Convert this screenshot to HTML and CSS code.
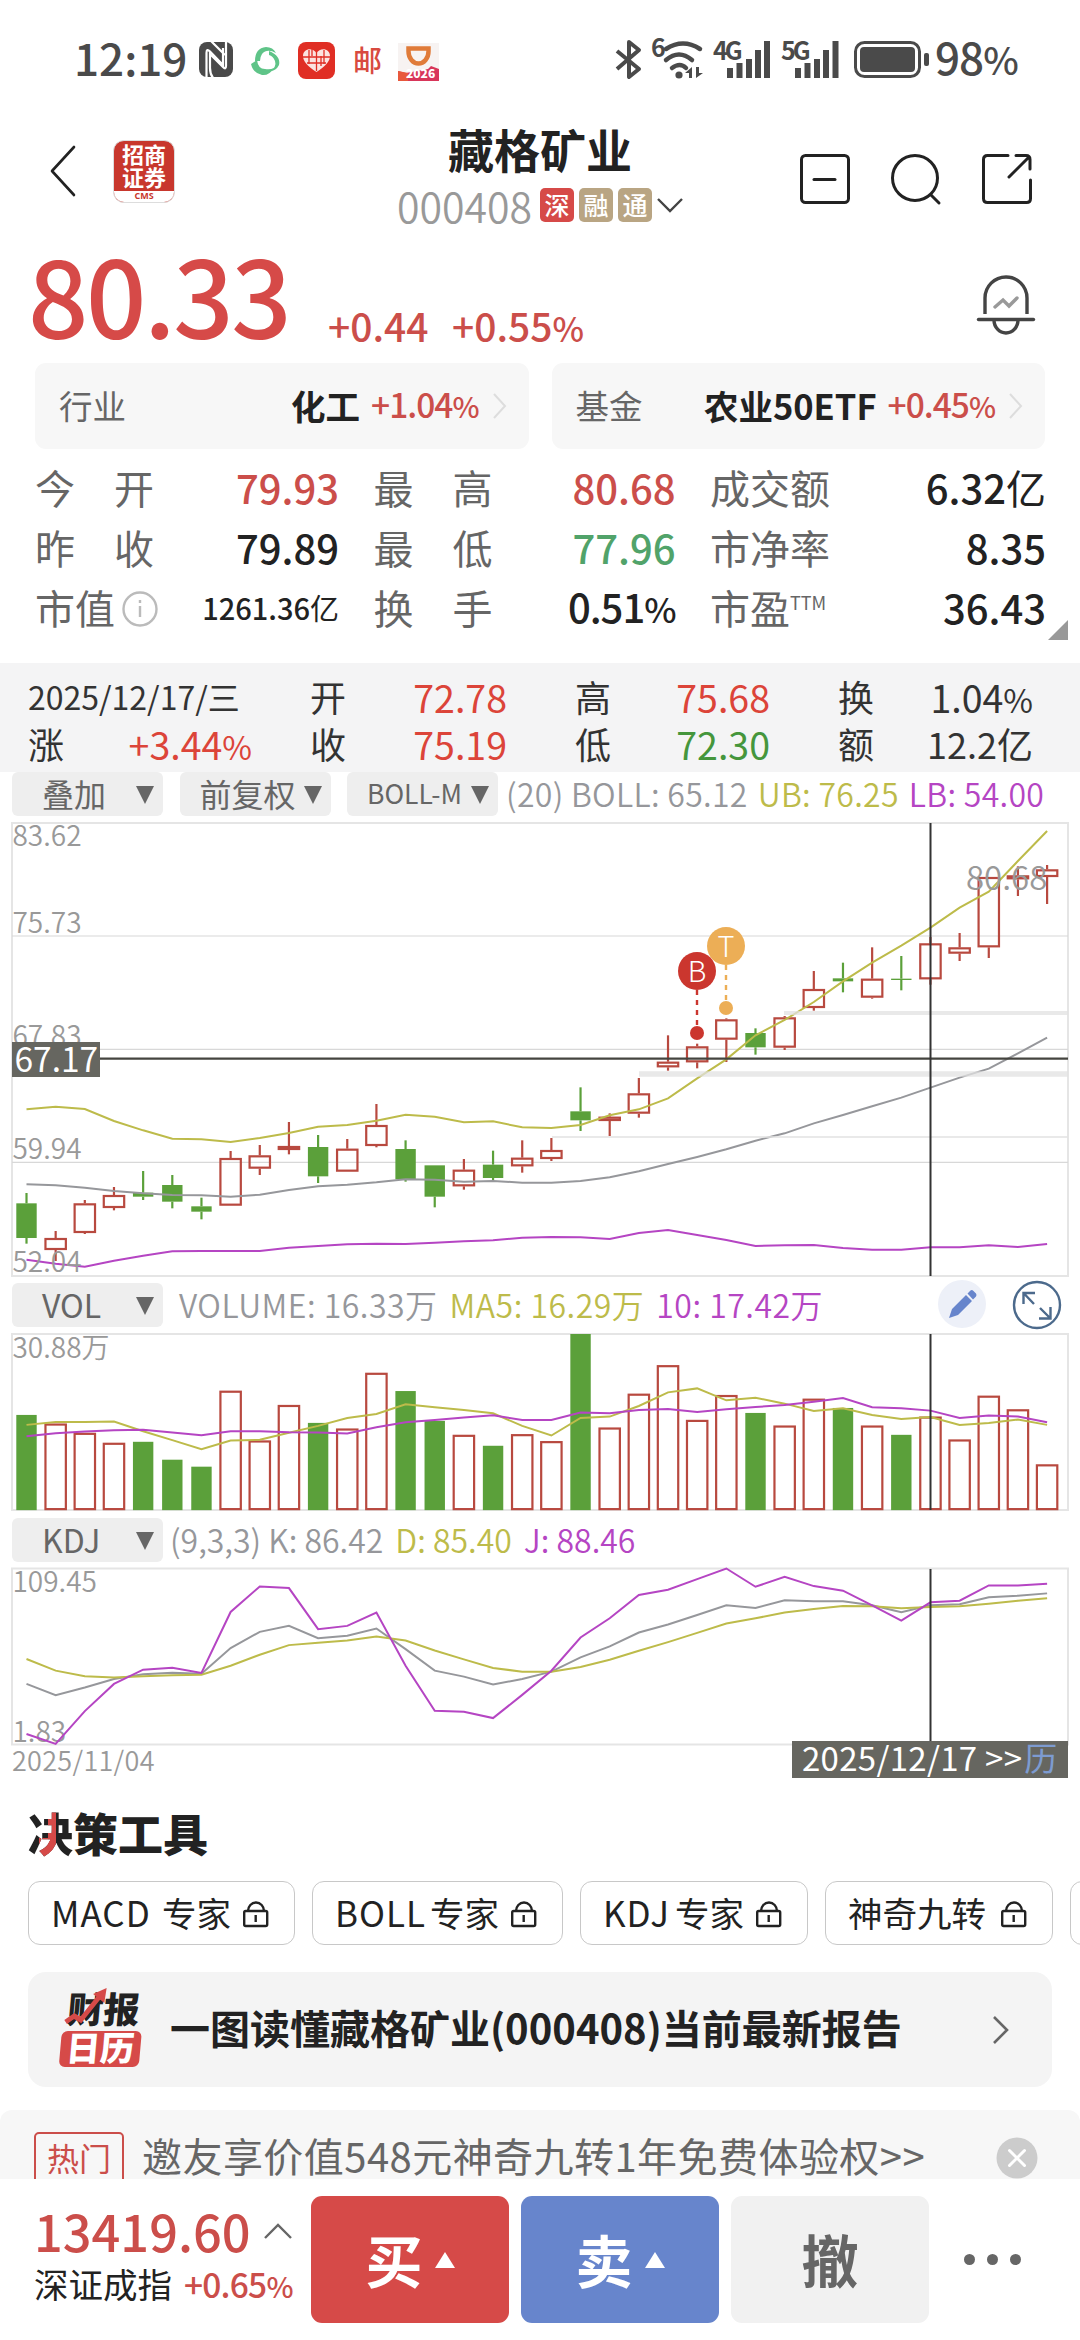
FILE: index.html
```html
<!DOCTYPE html>
<html lang="zh-CN">
<head>
  <meta charset="UTF-8">
  <meta name="viewport" content="width=device-width, initial-scale=1.0">
  <title>藏格矿业 000408</title>
  <link rel="stylesheet" href="styles.css">
</head>
<body>
  <div class="status-bar">
    <span class="time">12:19</span>
    <svg class="status-left" width="242" height="44" viewBox="199 38 242 44">
      <!-- nfc -->
      <rect x="199" y="42" width="34" height="35" rx="8" fill="#4a4a4a"/>
      <path d="M206.500 78V53q0-5 3.500-1.500l13 13.500V48M211 41l14 14" fill="none" stroke="#fff" stroke-width="2.200"/>
      <path d="M226 41V66q0 4-3 1l-13-13v14q0 6 3 10" fill="none" stroke="#fff" stroke-width="2.200"/>
      <!-- swirl -->
      <g fill="#5fc488">
        <path d="M255 61q0-13 11-14 7 0 10 6-9-5-14 1-2 3-2 7z"/>
        <path d="M269 51q12 5 10 14-3 6-9 6 7-4 5-10-2-5-6-6z"/>
        <path d="M251 64l6-4q1 9 8 9 5 1 9-1-5 8-12 7-9-2-11-11z"/>
      </g>
      <!-- heart -->
      <rect x="298" y="42" width="37" height="37" rx="8" fill="#e02e24"/>
      <path d="M316.500 72C308 67 303 61 303 56c0-8 10-9 13.500-3 3.500-6 13.500-5 13.500 3 0 5-5 11-13.500 16z" fill="#fbe3e0"/>
      <path d="M309 50v14M316.500 52v19M324 50v14M303 57h27M307 63h19M312 48v8M321 56v10" stroke="#e02e24" stroke-width="1.300" fill="none"/>
      <text x="353" y="72" class="post-icon">邮</text>
      <!-- orange cup -->
      <rect x="398" y="43" width="41" height="38" fill="#f7f3f2"/>
      <path d="M408.500 48.500h20v3a10 12 0 0 1-20 0z" fill="none" stroke="#e07b39" stroke-width="4.500"/>
      <path d="M398 71l8 2 22-4 3-3 8 3v12h-41z" fill="#d8365a"/>
      <path d="M398 71l10 2v8h-10z" fill="#e8583c"/>
      <text x="406" y="78" class="year-icon">2026</text>
    </svg>
    <svg class="status-right" width="318" height="44" viewBox="614 38 318 44">
      <path d="M617 51l22 18-10 8V42l10 8-22 19" fill="none" stroke="#4a4a4a" stroke-width="4" stroke-linejoin="round"/>
      <text x="651" y="57" class="net-label">6</text>
      <g fill="none" stroke="#4a4a4a" stroke-width="4.500" stroke-linecap="round">
        <path d="M666 49q17-11 34 0"/>
        <path d="M666 60q13-11 26 0"/>
        <path d="M672 68q8-6 14 0"/>
      </g>
      <circle cx="679" cy="75" r="3.600" fill="#4a4a4a"/>
      <path d="M685 73l7-6v11h-3v-5zM703 73l-7 5V67h3v6z" fill="#4a4a4a"/>
      <text x="713" y="60" class="net-label">4G</text>
      <path d="M730 68v10M739.500 63v15M749 59v19M758 50v28M767 41v37" stroke="#4a4a4a" stroke-width="6"/>
      <text x="781" y="60" class="net-label">5G</text>
      <path d="M798 68v10M807.500 63v15M817 59v19M826 50v28M835.500 41v37" stroke="#4a4a4a" stroke-width="6"/>
      <rect x="855.500" y="42.500" width="64" height="34" rx="9" fill="none" stroke="#4a4a4a" stroke-width="3"/>
      <rect x="860" y="47" width="55" height="25" rx="4" fill="#4a4a4a"/>
      <rect x="924" y="53" width="5" height="13" rx="2" fill="#4a4a4a"/>
    </svg>
    <span class="battery">98<small>%</small></span>
  </div>

  <header class="header">
    <svg class="back" width="26" height="52" viewBox="0 0 26 52"><path d="M24 2L2 26l22 24" fill="none" stroke="#222" stroke-width="2.600" stroke-linejoin="round" stroke-linecap="round"/></svg>
    <div class="broker">
      <div class="broker-name">招商<br>证券</div>
      <div class="broker-en">CMS</div>
    </div>
    <div class="stock">
      <h1>藏格矿业</h1>
      <div class="stock-code">
        <span class="code">000408</span>
        <span class="badge red">深</span>
        <span class="badge">融</span>
        <span class="badge">通</span>
        <svg width="26" height="16" viewBox="0 0 26 16"><path d="M1 2l12 12L25 2" fill="none" stroke="#444" stroke-width="2.400"/></svg>
      </div>
    </div>
    <div class="header-icons">
      <svg width="52" height="52" viewBox="0 0 52 52" fill="none" stroke="#222" stroke-width="3"><rect x="2.500" y="2.500" width="47" height="47" rx="4"/><path d="M15 26.500h21" stroke-linecap="round"/></svg>
      <svg width="52" height="52" viewBox="0 0 52 52" fill="none" stroke="#222" stroke-width="3"><circle cx="25" cy="25" r="22.500"/><path d="M41 42l8 8" stroke-linecap="round"/></svg>
      <svg width="52" height="52" viewBox="0 0 52 52" fill="none" stroke="#222" stroke-width="3" stroke-linecap="round"><path d="M27 2.500H6.500q-4 0-4 4v39q0 4 4 4h39q4 0 4-4V27"/><path d="M35 2.500h10q4 0 4 4V16M48 4L28 24"/></svg>
    </div>
  </header>

  <section class="quote">
    <span class="price">80.33</span>
    <span class="change">+0.44</span>
    <span class="change-pct">+0.55<small>%</small></span>
    <svg class="bell" width="58" height="60" viewBox="0 0 58 60" fill="none" stroke="#444" stroke-width="3.400">
      <path d="M8 39V23a21 21 0 0 1 42 0v16"/>
      <path d="M1.500 44.500h55" stroke-linecap="round"/>
      <path d="M17 45a12 13 0 0 0 24 0"/>
      <path d="M18 32l8-7 6 6 8-8" stroke="#999" stroke-linecap="round"/>
    </svg>
  </section>

  <section class="links">
    <div class="link-card">
      <span class="link-label">行业</span>
      <b>化工</b>
      <span class="link-pct">+1.04<small>%</small></span>
      <svg width="16" height="28" viewBox="0 0 16 28"><path d="M2 2l11 12L2 26" fill="none" stroke="#ddd" stroke-width="2"/></svg>
    </div>
    <div class="link-card">
      <span class="link-label">基金</span>
      <b>农业50ETF</b>
      <span class="link-pct">+0.45<small>%</small></span>
      <svg width="16" height="28" viewBox="0 0 16 28"><path d="M2 2l11 12L2 26" fill="none" stroke="#ddd" stroke-width="2"/></svg>
    </div>
  </section>

  <section class="stats">
    <div class="stat"><span class="label spread">今开</span><span class="value up">79.93</span></div>
    <div class="stat"><span class="label spread">最高</span><span class="value up">80.68</span></div>
    <div class="stat"><span class="label">成交额</span><span class="value">6.32<i>亿</i></span></div>
    <div class="stat"><span class="label spread">昨收</span><span class="value">79.89</span></div>
    <div class="stat"><span class="label spread">最低</span><span class="value down">77.96</span></div>
    <div class="stat"><span class="label">市净率</span><span class="value">8.35</span></div>
    <div class="stat">
      <span class="label with-info">市值<svg width="38" height="38" viewBox="0 0 38 38" fill="none" stroke="#bbb" stroke-width="2.400"><circle cx="19" cy="19" r="16.500"/><path d="M19 16v11M19 10v3"/></svg></span>
      <span class="value small">1261.36<i>亿</i></span>
    </div>
    <div class="stat"><span class="label spread">换手</span><span class="value percent">0.51<small>%</small></span></div>
    <div class="stat"><span class="label">市盈<sup>TTM</sup></span><span class="value">36.43</span></div>
    <span class="corner"></span>
  </section>

  <section class="day-info">
    <div class="cell"><span class="date">2025/12/17/三</span></div>
    <div class="cell"><span>开</span><span class="num rise">72.78</span></div>
    <div class="cell"><span>高</span><span class="num rise">75.68</span></div>
    <div class="cell"><span>换</span><span class="num">1.04<small>%</small></span></div>
    <div class="cell"><span>涨</span><span class="num rise">+3.44<small>%</small></span></div>
    <div class="cell"><span>收</span><span class="num rise">75.19</span></div>
    <div class="cell"><span>低</span><span class="num fall">72.30</span></div>
    <div class="cell"><span>额</span><span>12.2亿</span></div>
  </section>

  <section class="charts">
    <div class="toolbar main-toolbar">
      <div class="select"><span>叠加</span><i></i></div>
      <div class="select"><span>前复权</span><i></i></div>
      <div class="select narrow"><span>BOLL-M</span><i></i></div>
      <div class="legend">
        <span class="gray">(20) BOLL: 65.12</span>
        <span class="yellow">UB: 76.25</span>
        <span class="purple">LB: 54.00</span>
      </div>
    </div>
    <svg id="kline" class="kline" width="1080" height="467"></svg>

    <div class="toolbar">
      <div class="select latin"><span>VOL</span><i></i></div>
      <div class="legend vol-legend">
        <span class="gray">VOLUME: 16.33万</span>
        <span class="yellow">MA5: 16.29万</span>
        <span class="purple">10: 17.42万</span>
      </div>
      <div class="chart-actions">
        <svg width="48" height="48" viewBox="0 0 48 48"><circle cx="24" cy="24" r="24" fill="#edf0f8"/><path d="M11 38l3-9 14-14 6 6-14 14zM29.500 13.500l3-3q1.500-1 3 .5l2.500 2.500q1 1.500 0 3l-3 3z" fill="#6785cc"/></svg>
        <svg width="50" height="50" viewBox="0 0 50 50" fill="none" stroke="#4c6a8c" stroke-width="2.400"><circle cx="25" cy="25" r="23"/><path d="M22 24L12 13.500M11.500 24V13h11.500M28 28l10 10M38.500 27v11.500H27"/></svg>
      </div>
    </div>
    <svg id="volume" class="panel" width="1080" height="191"></svg>

    <div class="toolbar">
      <div class="select latin"><span>KDJ</span><i></i></div>
      <div class="legend kdj-legend">
        <span class="gray">(9,3,3) K: 86.42</span>
        <span class="yellow">D: 85.40</span>
        <span class="purple">J: 88.46</span>
      </div>
    </div>
    <svg id="kdj" class="panel" width="1080" height="183"></svg>
    <div class="dates">
      <span>2025/11/04</span>
      <span class="cursor-date">2025/12/17 &gt;&gt;<em>历</em></span>
    </div>
  </section>

  <section class="tools">
    <h2><span class="accent">决</span>策工具</h2>
    <div class="chips">
      <div class="chip macd">MACD<span>专家</span><svg class="lock"><use href="#lock"/></svg></div>
      <div class="chip boll">BOLL<span>专家</span><svg class="lock"><use href="#lock"/></svg></div>
      <div class="chip">KDJ<span>专家</span><svg class="lock"><use href="#lock"/></svg></div>
      <div class="chip"><span class="cn">神奇九转</span><svg class="lock"><use href="#lock"/></svg></div>
      <div class="chip"></div>
    </div>
    <div class="report">
      <div class="report-icon">
        <div class="report-top">财报<svg width="40" height="38" viewBox="0 0 40 38"><path d="M1 34l8-6 7 4L33 8" fill="none" stroke="#d64a48" stroke-width="5"/><path d="M26 6l13-6-1 15z" fill="#d64a48"/></svg></div>
        <div class="report-bottom">日历</div>
      </div>
      <span class="report-title">一图读懂藏格矿业(000408)当前最新报告</span>
      <svg width="18" height="30" viewBox="0 0 18 30"><path d="M2 2l13 13L2 28" fill="none" stroke="#666" stroke-width="2.600"/></svg>
    </div>
  </section>

  <section class="promo">
    <span class="hot">热门</span>
    <span class="promo-text">邀友享价值548元神奇九转1年免费体验权&gt;&gt;</span>
    <svg width="42" height="42" viewBox="0 0 42 42"><circle cx="21" cy="21" r="20.500" fill="#ccc"/><path d="M13.500 13.500l15 15M28.500 13.500l-15 15" stroke="#fff" stroke-width="3" stroke-linecap="round"/></svg>
  </section>

  <footer class="trade-bar">
    <div class="index">
      <div class="index-value">13419.60<svg width="28" height="16" viewBox="0 0 28 16"><path d="M1 15L14 2l13 13" fill="none" stroke="#666" stroke-width="2.400"/></svg></div>
      <div class="index-name">深证成指<span>+0.65<small>%</small></span></div>
    </div>
    <div class="btn buy">买<i></i></div>
    <div class="btn sell">卖<i></i></div>
    <div class="btn cancel">撤</div>
    <div class="more"><i></i><i></i><i></i></div>
  </footer>

  <svg width="0" height="0" class="defs">
    <symbol id="lock" viewBox="0 0 28 30">
      <path d="M6 12a8 8.500 0 0 1 16 0" fill="none" stroke="#222" stroke-width="2.400"/>
      <rect x="2.200" y="12" width="23" height="15" rx="1.500" fill="none" stroke="#222" stroke-width="2.400"/>
      <path d="M13.700 16v7" stroke="#222" stroke-width="2.400"/>
    </symbol>
  </svg>
  <script src="chart.js"></script>
</body>
</html>
```

FILE: styles.css
```css
* {
  box-sizing: border-box;
}

body {
  margin: 0;
  width: 1080px;
  height: 2340px;
  overflow: hidden;
  background: #fff;
  color: #222;
  font-family: "Noto Sans CJK SC", "Noto Sans", sans-serif;
  display: flex;
  flex-direction: column;
}

i, em {
  font-style: normal;
}

small {
  font-size: 0.86em;
}

svg {
  display: block;
  flex: none;
  overflow: visible;
}

.defs {
  position: absolute;
}

/* status bar */
.status-bar {
  height: 120px;
  padding-left: 74px;
  display: flex;
  align-items: center;
  color: #4a4a4a;
  font-size: 44px;
  font-weight: 500;
  line-height: 60px;
}

.time {
  width: 125px;
  margin-top: -6px;
}

.status-left {
  overflow: hidden;
}

.status-right {
  margin-left: 173px;
}

.battery {
  margin-left: 3px;
  margin-top: -6px;
  letter-spacing: -1px;
}

.post-icon {
  font-size: 29px;
  font-weight: 500;
  fill: #d84a40;
}

.year-icon {
  font-size: 12px;
  font-weight: 900;
  fill: #fff;
}

.net-label {
  font: 700 25px "Noto Sans CJK SC", sans-serif;
  letter-spacing: -3px;
  fill: #4a4a4a;
}

/* header */
.header {
  height: 122px;
  padding: 0 47px 0 50px;
  display: flex;
  align-items: flex-start;
}

.back {
  margin-top: 25px;
}

.broker {
  width: 62px;
  height: 63px;
  margin: 20px 0 0 37px;
  border-radius: 11px;
  background: #c8372d;
  border: 1px solid #ddd;
  overflow: hidden;
  text-align: center;
}

.broker-name {
  height: 50px;
  padding-top: 1px;
  color: #fff;
  font-size: 22px;
  font-weight: 700;
  line-height: 23px;
}

.broker-en {
  height: 13px;
  background: #fff;
  color: #c8372d;
  font: 700 9px/9px "Open Sans", sans-serif;
}

.stock {
  width: 286px;
  margin-left: 222px;
}

h1 {
  margin: 0;
  font-size: 46px;
  font-weight: 700;
  line-height: 56px;
  text-align: center;
}

.stock-code {
  display: flex;
  align-items: center;
  gap: 5px;
  margin-top: 6px;
}

.code {
  width: 138px;
  color: #999;
  font-size: 41px;
  font-weight: 350;
  line-height: 46px;
}

.badge {
  width: 34px;
  height: 34px;
  border-radius: 5px;
  background: #b9a583;
  color: #fff;
  font-size: 25px;
  line-height: 32px;
  text-align: center;
  font-weight: 500;
}

.badge.red {
  background: #d64a48;
}

.header-icons {
  display: flex;
  gap: 39px;
  margin: 33px 0 0 auto;
}

/* price */
.quote {
  height: 121px;
  padding: 0 45px 0 28px;
  display: flex;
  align-items: flex-start;
  color: #d64a48;
  font-weight: 500;
}

.price {
  width: 300px;
  margin-top: -2px;
  font-size: 106px;
  line-height: 106px;
  letter-spacing: -2.4px;
}

.change,
.change-pct {
  margin-top: 55px;
  font-size: 39px;
  line-height: 56px;
  color: #cb4e4a;
}

.change {
  width: 124px;
}

.bell {
  margin: 33px 0 0 auto;
}

/* industry / fund cards */
.links {
  height: 86px;
  padding: 0 35px;
  display: grid;
  grid-template-columns: 1fr 1fr;
  gap: 23px;
}

.link-card {
  display: flex;
  align-items: center;
  padding: 0 21px 3px 24px;
  border-radius: 11px;
  background: #f7f7f7;
  font-size: 33.5px;
  line-height: 50px;
}

.link-card b {
  font-size: 34.5px;
}

.link-label {
  color: #666;
  margin-right: auto;
}

.link-pct {
  margin: 0 13px 0 11px;
  color: #cb4e4a;
  font-weight: 500;
  letter-spacing: -1px;
}

.link-card svg {
  margin-top: 3px;
}

/* stats */
.stats {
  position: relative;
  height: 214px;
  padding: 8px 34px 0 35px;
  display: grid;
  grid-template-columns: 304px 302px 336px;
  grid-template-rows: repeat(3, 60px);
  justify-content: space-between;
}

.stat {
  display: flex;
  justify-content: space-between;
  align-items: center;
  font-size: 40px;
  line-height: 60px;
}

.label {
  color: #666;
  white-space: nowrap;
}

.label.spread {
  width: 119px;
  text-align-last: justify;
}

.label.with-info {
  display: flex;
  align-items: center;
  gap: 6px;
}

.label svg {
  margin-top: 4px;
}

.label sup {
  font-size: 18px;
  line-height: 0;
  vertical-align: 14px;
}

.value {
  font-weight: 500;
}

.value i {
  font-weight: 400;
}

.value.small {
  font-size: 29px;
}

.value.percent {
  letter-spacing: -1px;
}

.up {
  color: #cb4e4a;
}

.down {
  color: #51a36a;
}

.corner {
  position: absolute;
  left: 1048px;
  top: 171px;
  border-left: 20px solid transparent;
  border-bottom: 20px solid #999;
}

/* selected day */
.day-info {
  height: 109px;
  padding: 10px 0 0 28px;
  background: #f4f4f5;
  display: grid;
  grid-template-columns: 282px 265px 263px 195px;
  grid-template-rows: 47px 47px;
  color: #333;
  font-size: 36px;
  line-height: 47px;
}

.cell {
  display: flex;
  justify-content: space-between;
  padding-right: 68px;
}

.cell:nth-child(4n+1) {
  padding-right: 58px;
}

.cell:nth-child(4n) {
  padding-right: 0;
}

.num {
  font-size: 37.5px;
}

.date {
  font-size: 32px;
  white-space: nowrap;
}

.rise {
  color: #dc4439;
}

.fall {
  color: #45963c;
}

/* indicator toolbars */
.toolbar {
  display: flex;
  align-items: center;
  height: 44px;
  padding-left: 12px;
}

.select {
  display: flex;
  align-items: center;
  justify-content: space-between;
  width: 151px;
  height: 44px;
  padding: 0 9px 3px 20px;
  border-radius: 6px;
  background: #eee;
  color: #666;
  font-size: 32px;
  line-height: 40px;
  white-space: nowrap;
}

.main-toolbar .select {
  margin-right: 16.5px;
}

.main-toolbar .select:first-child,
.select.latin {
  padding-left: 30px;
}

.select.narrow {
  font-size: 26.5px;
}

.main-toolbar .select.narrow {
  margin-right: 8px;
}

.select i {
  flex: none;
  border: 9.5px solid transparent;
  border-top: 18px solid #666;
  border-bottom: 0;
  margin-top: 4px;
}

.legend {
  display: flex;
  gap: 10px;
  padding-bottom: 2px;
  font-size: 32px;
  font-weight: 350;
  line-height: 40px;
  white-space: nowrap;
}

.main-toolbar .legend {
  letter-spacing: 0.3px;
}

.vol-legend {
  margin-left: 16px;
  gap: 12px;
  letter-spacing: 0.5px;
}

.kdj-legend {
  margin-left: 7px;
  gap: 12px;
}

.gray {
  color: #96979b;
}

.yellow {
  color: #bdbb4a;
}

.purple {
  color: #b545c3;
}

.chart-actions {
  display: flex;
  gap: 26px;
  margin: 0 18px 0 auto;
}

/* charts */
.kline text,
.panel text {
  font-size: 28px;
  font-weight: 350;
  fill: #999;
}

.kline .cursor-price {
  font-size: 33.5px;
  font-weight: 400;
  fill: #fff;
}

.kline .last-high {
  font-size: 33px;
}

.kline .mark {
  font: 300 29px "Noto Sans CJK SC", sans-serif;
  fill: #fff;
  text-anchor: middle;
}

.dates {
  display: flex;
  justify-content: space-between;
  height: 32px;
  padding: 0 12px 0 12px;
  color: #999;
  font-size: 27px;
  font-weight: 350;
  letter-spacing: 0.3px;
  line-height: 30px;
}

.cursor-date {
  width: 276px;
  height: 37px;
  margin-top: -4px;
  padding-left: 10px;
  background: #666660;
  color: #fff;
  font-size: 33px;
  font-weight: 400;
  line-height: 33px;
  position: relative;
  white-space: nowrap;
}

.cursor-date em {
  color: #7d9bd0;
  margin-left: 2px;
}

/* tools */
.tools {
  height: 333px;
  padding-left: 28px;
}

h2 {
  margin: 0;
  padding-top: 32px;
  font-size: 45px;
  font-weight: 900;
  line-height: 48px;
  height: 104px;
}

.accent {
  background: linear-gradient(#d64a48, #d64a48) 53% 0 / 8px 100% no-repeat,
    linear-gradient(#d64a48, #d64a48) 11px 38px / 14px 26px no-repeat,
    #222;
  -webkit-background-clip: text;
  background-clip: text;
  color: transparent;
}

.chips {
  display: flex;
  gap: 17px;
  width: 1052px;
  overflow: hidden;
}

.chip {
  flex: none;
  display: flex;
  align-items: center;
  width: 228px;
  height: 64px;
  padding: 0 24px 3px 22px;
  border: 1px solid #c8c8c8;
  border-radius: 12px;
  font-size: 35px;
  line-height: 50px;
  letter-spacing: 1px;
  white-space: nowrap;
}

.chip.macd {
  width: 267px;
}

.chip.boll {
  width: 251px;
}

.chip span {
  margin-left: auto;
  font-size: 34.5px;
  letter-spacing: 0;
}

.chip .cn {
  margin-left: 0;
}

.lock {
  width: 28px;
  height: 30px;
  margin: 4px 0 0 11px;
}

.chip .cn + .lock {
  margin-left: auto;
}

.report {
  display: flex;
  align-items: center;
  width: 1024px;
  height: 115px;
  margin-top: 27px;
  padding: 0 42px 0 34px;
  border-radius: 18px;
  background: #f4f4f4;
}

.report-icon {
  width: 80px;
  transform: skewX(-5deg);
  font-weight: 900;
  text-align: center;
}

.report-top {
  position: relative;
  height: 39px;
  font-size: 36px;
  line-height: 31px;
}

.report-top svg {
  position: absolute;
  left: 2px;
  top: -4px;
}

.report-bottom {
  height: 36px;
  border-radius: 6px;
  background: #d64a48;
  color: #fff;
  font-size: 34px;
  line-height: 32px;
}

.report-title {
  margin: -5px auto 0 28px;
  font-size: 40px;
  font-weight: 700;
}

/* promo */
.promo {
  display: flex;
  align-items: flex-start;
  height: 69px;
  padding: 22px 42px 0 34px;
  border-radius: 12px 12px 0 0;
  background: #f7f7f7;
  overflow: hidden;
}

.hot {
  width: 90px;
  height: 52px;
  border: 2px solid #cb4e4a;
  border-radius: 5px;
  color: #cb4e4a;
  font-size: 32px;
  line-height: 46px;
  text-align: center;
}

.promo-text {
  margin: 0 auto 0 18px;
  color: #666;
  font-size: 40px;
  line-height: 46px;
  letter-spacing: 0.45px;
}

.promo svg {
  margin-top: 5px;
}

/* bottom bar */
.trade-bar {
  display: flex;
  height: 161px;
  padding: 17px 0 0 34px;
  background: #fff;
}

.index {
  width: 277px;
}

.index-value {
  display: flex;
  align-items: center;
  gap: 13px;
  color: #cb4e4a;
  font-size: 50.5px;
  font-weight: 500;
  line-height: 69px;
}

.index-name {
  margin-top: -3px;
  font-size: 34.5px;
  line-height: 42px;
  white-space: nowrap;
}

.index-name span {
  margin-left: 12px;
  color: #cb4e4a;
  font-size: 33.5px;
  font-weight: 500;
  letter-spacing: -0.8px;
}

.btn {
  display: flex;
  align-items: center;
  justify-content: center;
  gap: 12px;
  width: 198px;
  height: 127px;
  margin-right: 12px;
  padding-bottom: 3px;
  border-radius: 11px;
  color: #fff;
  font-size: 57px;
  font-weight: 700;
  line-height: 80px;
}

.btn i {
  border: 10.5px solid transparent;
  border-bottom: 16px solid #fff;
  border-top: 0;
  margin-top: 4px;
}

.buy {
  background: #d64a48;
}

.sell {
  background: #6785cc;
}

.cancel {
  background: #f1f1f1;
  color: #666;
}

.more {
  display: flex;
  gap: 12px;
  padding: 58px 0 0 23px;
}

.more i {
  width: 11px;
  height: 11px;
  border-radius: 50%;
  background: #666;
}
```

FILE: chart.js
```js
const STEP = 29.16;
const LEFT = 12;
const RIGHT = 1068;
const CURSOR_X = 930.5;
const RED = '#b8493f';
const GREEN = '#5ba03a';

// [high, body top, body bottom, low, falling]; three units per pixel
const candles = [
  [1179, 1210, 1314, 1331, 1], [1293, 1314, 1350, 1383], [1200, 1210, 1299, 1302],
  [1161, 1185, 1224, 1231], [1113, 1178, 1190, 1200, 1], [1125, 1155, 1205, 1225, 1],
  [1193, 1219, 1235, 1258, 1], [1053, 1074, 1217, 1217], [1035, 1066, 1106, 1125],
  [966, 1038, 1050, 1063], [1005, 1041, 1129, 1149, 1], [1017, 1046, 1115, 1115],
  [912, 975, 1038, 1042], [1021, 1047, 1138, 1145, 1], [1096, 1096, 1190, 1222, 1],
  [1077, 1109, 1159, 1169], [1052, 1094, 1134, 1142, 1], [1021, 1073, 1099, 1118],
  [1014, 1050, 1077, 1083], [862, 934, 961, 993, 1], [940, 950, 963, 1008],
  [834, 880, 941, 953], [706, 785, 802, 812], [731, 739, 787, 805],
  [655, 658, 719, 786], [685, 699, 742, 764, 1], [648, 652, 743, 750],
  [513, 567, 624, 632], [488, 535, 544, 577, 1], [442, 536, 593, 596],
  [468, 536, 540, 571, 1], [411, 430, 538, 554], [399, 442, 461, 483],
  [231, 231, 442, 474], [199, 226, 238, 288], [195, 208, 231, 312]
];
const boll = {
  '#bdbb4a': [928, 920, 927, 963, 991, 1016, 1018, 1026, 1014, 999, 980, 975, 962, 944, 950, 967, 964, 982, 984, 975, 946, 928, 895, 835, 778, 706, 660, 606, 544, 488, 437, 383, 323, 275, 183, 93],
  '#96979b': [1153, 1156, 1163, 1173, 1180, 1185, 1186, 1190, 1184, 1170, 1159, 1154, 1147, 1138, 1139, 1145, 1143, 1148, 1148, 1143, 1132, 1114, 1092, 1071, 1048, 1022, 1000, 970, 945, 919, 893, 863, 833, 806, 760, 713],
  '#b545c3': [1379, 1391, 1400, 1382, 1367, 1354, 1353, 1353, 1353, 1343, 1338, 1333, 1331, 1332, 1328, 1324, 1321, 1313, 1311, 1312, 1317, 1299, 1290, 1305, 1320, 1338, 1336, 1335, 1344, 1349, 1349, 1342, 1342, 1336, 1341, 1332]
};
const volumes = [435, 461, 489, 519, 516, 570, 591, 362, 512, 405, 459, 476, 308, 363, 453, 495, 528, 493, 514, 191, 473, 371, 285, 450, 375, 429, 467, 386, 414, 467, 495, 440, 509, 377, 418, 584];
const volMa = {
  '#bdbb4a': [465, 456, 456, 455, 484, 511, 538, 512, 510, 489, 468, 444, 432, 403, 412, 420, 430, 468, 497, 444, 440, 408, 367, 355, 391, 383, 401, 423, 415, 435, 447, 441, 465, 459, 449, 465],
  '#b545c3': [499, 490, 485, 481, 480, 488, 496, 484, 484, 487, 488, 491, 472, 457, 450, 443, 436, 450, 450, 428, 430, 420, 417, 426, 418, 411, 405, 395, 384, 412, 415, 422, 444, 437, 440, 457]
};
const kdj = {
  '#96979b': [1245, 1279, 1256, 1230, 1216, 1211, 1214, 1137, 1088, 1070, 1107, 1100, 1078, 1140, 1205, 1223, 1247, 1230, 1208, 1165, 1132, 1090, 1066, 1037, 1008, 1016, 993, 996, 996, 1008, 1029, 1008, 1005, 984, 979, 972],
  '#bdbb4a': [1170, 1205, 1222, 1226, 1222, 1219, 1217, 1190, 1157, 1128, 1121, 1114, 1102, 1114, 1144, 1171, 1197, 1208, 1208, 1194, 1172, 1145, 1119, 1091, 1063, 1047, 1030, 1019, 1010, 1011, 1017, 1013, 1011, 1003, 994, 987],
  '#b545c3': [1396, 1426, 1327, 1245, 1202, 1196, 1212, 1028, 951, 956, 1080, 1070, 1030, 1190, 1326, 1329, 1348, 1278, 1205, 1105, 1047, 977, 961, 929, 897, 952, 922, 950, 964, 1008, 1054, 999, 994, 948, 948, 943]
};

const x = i => 26.5 + i * STEP;

function scale(top, offset, units = 3) {
  return v => (v - top) / units + offset;
}

function line(x1, y1, x2, y2, color, width) {
  return `<path d="M${x1} ${y1}L${x2} ${y2}" stroke="${color}" stroke-width="${width}"/>`;
}

function frame(top, height) {
  return `<rect x="${LEFT}" y="${top}" width="${RIGHT - LEFT}" height="${height}" fill="none" stroke="#e5e5e5" stroke-width="2"/>`;
}

function bar(i, top, bottom, falling) {
  if (falling) {
    return `<rect x="${x(i) - 10.2}" y="${top}" width="20.4" height="${Math.max(bottom - top, 1.2)}" fill="${GREEN}"/>`;
  }
  return `<rect x="${x(i) - 10.2}" y="${top + 1}" width="20.4" height="${Math.max(bottom - top - 2, 1)}" fill="none" stroke="${RED}" stroke-width="2.2"/>`;
}

function lines(series, y) {
  return Object.entries(series).map(([color, values]) =>
    `<polyline points="${values.map((v, i) => x(i) + ',' + y(v)).join(' ')}" fill="none" stroke="${color}" stroke-width="2"/>`
  ).join('');
}

function text(tx, ty, label, cls = '') {
  return `<text x="${tx}" y="${ty}" class="${cls}">${label}</text>`;
}

function marker(cx, cy, color, label) {
  return line(cx, cy + 19, cx, cy + 58, color, 2.4).replace('/>', ' stroke-dasharray="5 5"/>') +
    `<circle cx="${cx}" cy="${cy}" r="19" fill="${color}"/>` +
    `<circle cx="${cx}" cy="${cy + 62}" r="7" fill="${color}"/>` +
    text(cx, cy + 10.5, label, 'mark');
}

function drawKline() {
  const y = scale(69, 7);
  let out = frame(7, 453);
  [408, 748, 1087].forEach(v => { out += line(LEFT, y(v), RIGHT, y(v), '#d8d8d8', 1.2); });
  candles.forEach(([high, top, bottom, low, falling], i) => {
    const color = falling ? GREEN : RED;
    out += line(x(i), y(high), x(i), y(top), color, 2.2);
    out += line(x(i), y(bottom), x(i), y(low), color, 2.2);
    out += bar(i, y(top), y(bottom), falling);
  });
  out += lines(boll, y);
  // open gaps
  out += line(639, y(822), RIGHT, y(822), 'rgba(225,225,225,.75)', 5.4);
  out += line(784, y(639), RIGHT, y(639), 'rgba(225,225,225,.75)', 4);
  out += line(552, y(1011), RIGHT, y(1011), 'rgba(225,225,225,.75)', 2);
  out += marker(697, 155, '#cb362e', 'B');
  out += marker(726, 130, '#ecae56', 'T');
  out += text(12.5, 30, '83.62') + text(12.5, 117, '75.73') + text(12.5, 230, '67.83');
  out += text(12.5, 343, '59.94') + text(12.5, 456, '52.04');
  out += text(966, 74, '80.68', 'last-high');
  out += line(LEFT, y(776), RIGHT, y(776), '#44443f', 2.4);
  out += line(CURSOR_X, 7, CURSOR_X, 460, '#333', 2);
  out += '<rect x="12" y="226" width="88" height="35" fill="#666660"/>';
  out += text(14.5, 256, '67.17', 'cursor-price');
  document.getElementById('kline').innerHTML = out;
}

function drawVolume() {
  const y = scale(191, 7, 3.015);
  let out = frame(7, 176);
  volumes.forEach((v, i) => { out += bar(i, y(v), y(722), candles[i][4]); });
  out += lines(volMa, y);
  out += text(12.5, 31, '30.88万');
  out += line(CURSOR_X, 7, CURSOR_X, 183, '#333', 2);
  document.getElementById('volume').innerHTML = out;
}

function drawKdj() {
  const y = scale(897, 6.5, 3.015);
  let out = frame(6.5, 176);
  out += text(12.5, 30, '109.45') + text(12.5, 180, '1.83');
  out += lines(kdj, y);
  out += line(CURSOR_X, 7, CURSOR_X, 182, '#333', 2);
  document.getElementById('kdj').innerHTML = out;
}

drawKline();
drawVolume();
drawKdj();
```
